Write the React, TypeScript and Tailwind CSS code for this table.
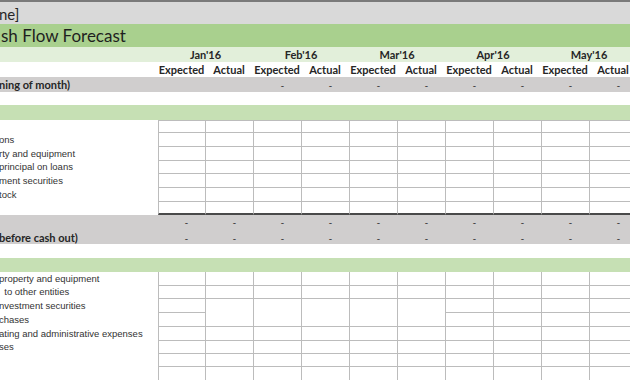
import React from 'react';

const months = ["Jan'16", "Feb'16", "Mar'16", "Apr'16", "May'16"];
const cols = Array.from({ length: 10 }, (_, i) => i);

const rowGrid = 'grid grid-cols-[158px_47px_repeat(9,48px)] w-[637px]';
const head = "font-['Lato',sans-serif] font-bold text-[11px] text-[#262626]";
const label = "font-['Liberation_Sans',Arial,sans-serif] text-[9.5px] text-[#333333] whitespace-pre";

const cashInRows = [
  { text: '', h: 'h-[13px]' },
  { text: 'ons', h: 'h-[14px]' },
  { text: 'rty and equipment', h: 'h-[14px]' },
  { text: 'principal on loans', h: 'h-[13px]' },
  { text: 'ment securities', h: 'h-[14px]' },
  { text: 'tock', h: 'h-[14px]' },
  { text: '', h: 'h-[13px]' },
];

const cashOutRows = [
  { text: 'property and equipment', h: 'h-[14px]' },
  { text: '  to other entities', h: 'h-[13px]' },
  { text: 'nvestment securities', h: 'h-[14px]' },
  { text: 'chases', h: 'h-[14px]' },
  { text: 'ating and administrative expenses', h: 'h-[14px]' },
  { text: 'ses', h: 'h-[13px]' },
  { text: '', h: 'h-[13px]' },
  { text: '', h: 'h-[14px]' },
];

const Dash = () => (
  <div className="flex items-center justify-end pr-[17px] font-['Liberation_Sans',Arial,sans-serif] text-[10px] text-[#404040]">-</div>
);

const GridRow = ({ text, h, top, last, gapCols }: { text: string; h: string; top?: boolean; last?: boolean; gapCols?: number[] }) => (
  <div className={`${rowGrid} ${h}`}>
    <div className={`${label} flex items-center -ml-[1px] overflow-hidden`}>{text}</div>
    {cols.map((c) => {
      const noBottom = gapCols?.includes(c);
      return (
        <div
          key={c}
          className={[
            'border-l border-[#bcbcbc]',
            top ? 'border-t' : '',
            last ? 'border-b-2 border-b-[#4a4a4a]' : noBottom ? '' : 'border-b',
          ].join(' ')}
        />
      );
    })}
  </div>
);

export default function App() {
  return (
    <div className="w-[630px] h-[380px] overflow-hidden bg-white">
      <div className="h-[2px] bg-[#7a7a7a]" />
      <div className="h-[22px] bg-[#d9d9d9] flex items-end pb-[2px]">
        <span className="font-['Lato',sans-serif] text-[15px] leading-none text-[#262626] -ml-[1px]">ne]</span>
      </div>
      <div className="h-[23px] bg-[#a9d08e] flex items-end pb-[3px]">
        <span className="font-['Lato',sans-serif] text-[17px] leading-none text-[#1f1f1f] pl-[1px]">sh Flow Forecast</span>
      </div>

      <div className={`${rowGrid} h-[15px] bg-[#e2efda]`}>
        <div />
        {months.map((m) => (
          <div key={m} className={`col-span-2 flex items-center justify-center ${head}`}>{m}</div>
        ))}
      </div>
      <div className={`${rowGrid} h-[15px]`}>
        <div />
        {months.map((m) => (
          <React.Fragment key={m}>
            <div className={`flex items-center justify-center ${head}`}>Expected</div>
            <div className={`flex items-center justify-center ${head}`}>Actual</div>
          </React.Fragment>
        ))}
      </div>
      <div className={`${rowGrid} h-[15px] bg-[#d0cece]`}>
        <div className={`flex items-center ${head} -ml-[1px]`}>ning of month)</div>
        {cols.map((c) => (c < 2 ? <div key={c} /> : <Dash key={c} />))}
      </div>
      <div className="h-[13px]" />
      <div className="h-[15px] bg-[#c6e0b4]" />

      {cashInRows.map((r, i) => (
        <GridRow key={i} text={r.text} h={r.h} top={i === 0} last={i === cashInRows.length - 1} />
      ))}

      <div className="bg-[#d0cece]">
        <div className={`${rowGrid} h-[15px]`}>
          <div />
          {cols.map((c) => <Dash key={c} />)}
        </div>
        <div className={`${rowGrid} h-[14px]`}>
          <div className={`flex items-center ${head} -ml-[1px]`}>before cash out)</div>
          {cols.map((c) => <Dash key={c} />)}
        </div>
      </div>
      <div className="h-[14px]" />
      <div className="h-[14px] bg-[#c6e0b4]" />

      {cashOutRows.map((r, i) => (
        <GridRow key={i} text={r.text} h={r.h} gapCols={i === 2 ? [1, 2, 3, 4, 5] : undefined} />
      ))}
    </div>
  );
}
